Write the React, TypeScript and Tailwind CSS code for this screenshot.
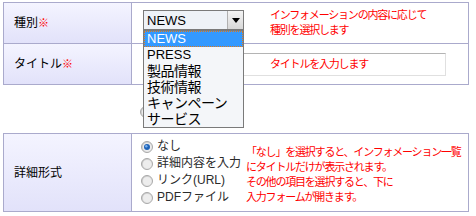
import React from "react";

const font = "font-['Liberation_Sans','Noto_Sans_CJK_JP',sans-serif]";

function Radio({ checked, id }: { checked?: boolean; id: string }) {
  return (
    <svg width="12" height="12" viewBox="0 0 12 12" className="shrink-0">
      <defs>
        <linearGradient id={id} x1="0" y1="0" x2="1" y2="1">
          <stop offset="0" stopColor="#c4c4c4" />
          <stop offset="1" stopColor="#f6f6f6" />
        </linearGradient>
      </defs>
      <circle cx="6" cy="6" r="5.5" fill={`url(#${id})`} stroke="#a8a8a8" strokeWidth="1" />
      <circle cx="6" cy="6" r="4" fill="#ededed" />
      {checked && <circle cx="6" cy="6" r="3" fill="#1f63b8" />}
      {checked && <circle cx="5.3" cy="5.2" r="1.2" fill="#78b0ee" />}
    </svg>
  );
}

const note = "text-[#ff0000] text-[11px] tracking-[-1.2px] leading-[15px] whitespace-nowrap";

export default function App() {
  const items = ["NEWS", "PRESS", "製品情報", "技術情報", "キャンペーン", "サービス"];
  const radios: [string, boolean][] = [
    ["なし", true],
    ["詳細内容を入力", false],
    ["リンク(URL)", false],
    ["PDFファイル", false],
  ];
  return (
    <div className={`relative w-[476px] h-[216px] bg-white ${font} text-[12px] text-black overflow-hidden`}>
      {/* Table 1 */}
      <div className="ml-[3px] mt-[2px] w-[466px] border border-[#aaaacc] flex flex-col">
        <div className="flex h-[41px] border-b border-[#aaaacc]">
          <div className="w-[128px] border-r border-[#aaaacc] bg-gradient-to-b from-[#f4f4ff] to-[#e2e2fa] flex items-center pl-[10px] whitespace-nowrap">
            種別<span className="text-[#ff0000] text-[11px]">※</span>
          </div>
          <div className="flex-1 flex items-start pt-[7px] pl-[11px]">
            <div className="w-[101px] h-[20px] border border-[#7a7a7a] bg-[#eef2f7] flex items-center shrink-0">
              <span className="pl-[3px] text-[13px] leading-none flex-1">NEWS</span>
              <div className="w-[16px] h-[18px] bg-gradient-to-b from-[#f4f4f4] to-[#d8d8d8] border-l border-[#b0b0b0] flex items-center justify-center">
                <svg width="8" height="5" viewBox="0 0 8 5"><path d="M0 0h8L4 5z" fill="#000" /></svg>
              </div>
            </div>
            <div className={`ml-[26px] mt-[-2px] ${note}`}>
              インフォメーションの内容に応じて<br />種別を選択します
            </div>
          </div>
        </div>
        <div className="flex h-[40px]">
          <div className="w-[128px] border-r border-[#aaaacc] bg-gradient-to-b from-[#f4f4ff] to-[#e2e2fa] flex items-center pl-[10px] whitespace-nowrap">
            タイトル<span className="text-[#ff0000] text-[11px]">※</span>
          </div>
          <div className="flex-1 flex items-center pl-[11px]">
            <div className={`w-[303px] h-[23px] border border-[#b4b4b4] border-b-[#e0e0e0] border-r-[#e0e0e0] flex items-center pl-[126px] ${note}`}>
              タイトルを入力します
            </div>
          </div>
        </div>
      </div>

      {/* Table 2 */}
      <div className="ml-[3px] mt-[48px] w-[466px] h-[79px] border border-[#aaaacc] flex">
        <div className="w-[128px] border-r border-[#aaaacc] bg-gradient-to-b from-[#f4f4ff] to-[#e2e2fa] flex items-center pl-[10px] whitespace-nowrap">
          詳細形式
        </div>
        <div className="flex-1 flex pl-[9px] pt-[4px]">
          <div className="flex flex-col text-[12px] leading-[17px] text-[#2a2a2a] shrink-0 w-[105px]">
            {radios.map(([t, c], i) => (
              <div key={t} className="flex items-center gap-[4px] h-[17px] whitespace-nowrap">
                <Radio checked={c} id={`r${i}`} />
                <span>{t}</span>
              </div>
            ))}
          </div>
          <div className={`mt-[7px] ${note}`}>
            「なし」を選択すると、インフォメーション一覧<br />
            にタイトルだけが表示されます。<br />
            その他の項目を選択すると、下に<br />
            入力フォームが開きます。
          </div>
        </div>
      </div>

      {/* partial radio behind dropdown */}
      <div className="absolute left-[140px] top-[106px]">
        <Radio id="rx" />
      </div>

      {/* Dropdown list overlay */}
      <div className="absolute left-[143px] top-[30px] w-[101px] h-[98px] border border-[#7a7a7a] bg-[#f4f6f9] leading-[16px] whitespace-nowrap">
        {items.map((it, i) => {
          const latin = /^[A-Z]+$/.test(it);
          return (
            <div
              key={it}
              className={
                (i === 0
                  ? "bg-[#3399ff] text-white outline-1 outline-dotted outline-[#e07a1a] -outline-offset-1 "
                  : "text-black ") +
                "h-[16px] pl-[3px] " +
                (latin ? "text-[13px]" : "text-[14px] tracking-[-0.5px]")
              }
            >
              {it}
            </div>
          );
        })}
      </div>
    </div>
  );
}
